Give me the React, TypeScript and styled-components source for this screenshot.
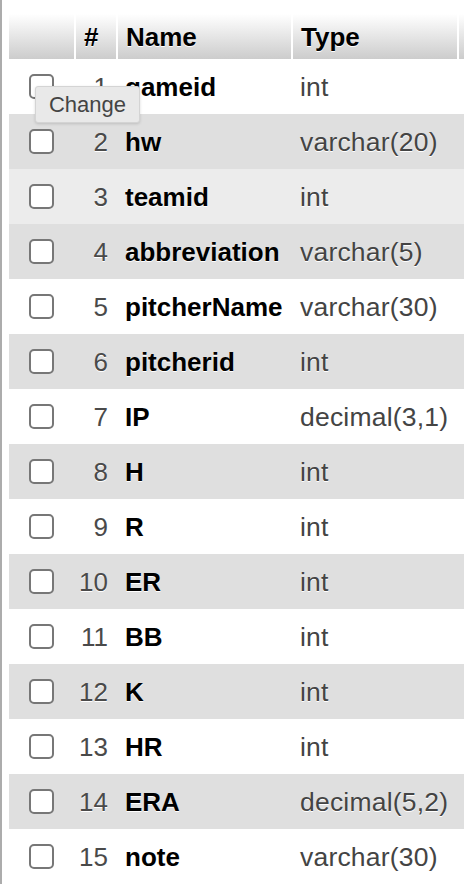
import React from "react";
import styled, { createGlobalStyle } from "styled-components";

const GlobalStyle = createGlobalStyle`
  html, body { margin: 0; padding: 0; background: #fff; overflow: hidden; }
  body { font-family: "Liberation Sans", Arial, sans-serif; }
`;

const Page = styled.div`
  width: 464px;
  height: 884px;
  border-left: 2px solid #acacac;
  box-sizing: border-box;
  padding: 14px 0 0 7px;
  overflow: hidden;
  position: relative;
`;

const Table = styled.div`
  width: 540px;
  display: flex;
  flex-direction: column;
`;

const cols = "67px 42px 175px 166px 1fr";

const HeaderRow = styled.div`
  display: grid;
  grid-template-columns: ${cols};
  height: 45px;
`;

const HeaderCell = styled.div<{ $pad?: number }>`
  border-right: 2px solid #fff;
  background: linear-gradient(to bottom, #ffffff 0%, #cccccc 100%);
  font-weight: bold;
  font-size: 26px;
  color: #000;
  text-shadow: 0 1px 0 #fff;
  display: flex;
  align-items: center;
  padding-left: ${(p) => p.$pad ?? 8}px;
  padding-top: 2px;
  box-sizing: border-box;
`;

const Row = styled.div<{ $bg: string }>`
  display: grid;
  grid-template-columns: ${cols};
  height: 55px;
  background: ${(p) => p.$bg};
  align-items: center;
`;

const CheckCell = styled.div`
  padding-left: 20px;
  display: flex;
  align-items: center;
`;

const Checkbox = styled.span`
  width: 25px;
  height: 25px;
  box-sizing: border-box;
  border: 2px solid #777;
  border-radius: 5px;
  background: #fff;
  display: inline-block;
`;

const NumCell = styled.div`
  text-align: right;
  padding-right: 10px;
  padding-top: 2px;
  font-size: 26px;
  color: #4a4a4a;
  text-shadow: 0 1px 0 #fff;
`;

const NameCell = styled.div`
  padding-left: 7px;
  padding-top: 2px;
  font-size: 26px;
  font-weight: bold;
  color: #000;
  white-space: nowrap;
  text-shadow: 0 1px 0 #fff;
`;

const TypeCell = styled.div`
  padding-left: 7px;
  padding-top: 2px;
  font-size: 26.5px;
  letter-spacing: 0.2px;
  color: #444;
  white-space: nowrap;
  text-shadow: 0 1px 0 #fff;
`;

const Tooltip = styled.div`
  position: absolute;
  left: 33px;
  top: 86px;
  width: 105px;
  height: 37px;
  box-sizing: border-box;
  background: #e9e9e9;
  border: 1px solid #d4d4d4;
  border-radius: 3px;
  box-shadow: 0 1px 3px rgba(0, 0, 0, 0.15);
  color: #444;
  font-size: 22px;
  display: flex;
  align-items: center;
  justify-content: center;
`;

const rows: [string, string][] = [
  ["gameid", "int"],
  ["hw", "varchar(20)"],
  ["teamid", "int"],
  ["abbreviation", "varchar(5)"],
  ["pitcherName", "varchar(30)"],
  ["pitcherid", "int"],
  ["IP", "decimal(3,1)"],
  ["H", "int"],
  ["R", "int"],
  ["ER", "int"],
  ["BB", "int"],
  ["K", "int"],
  ["HR", "int"],
  ["ERA", "decimal(5,2)"],
  ["note", "varchar(30)"],
];

function rowBg(i: number): string {
  if (i === 2) return "#ececec";
  return i % 2 === 1 ? "#dfdfdf" : "#ffffff";
}

export default function App() {
  return (
    <>
      <GlobalStyle />
      <Page>
        <Table>
          <HeaderRow>
            <HeaderCell />
            <HeaderCell>#</HeaderCell>
            <HeaderCell>Name</HeaderCell>
            <HeaderCell>Type</HeaderCell>
            <HeaderCell />
          </HeaderRow>
          {rows.map(([name, type], i) => (
            <Row key={name} $bg={rowBg(i)}>
              <CheckCell>
                <Checkbox />
              </CheckCell>
              <NumCell>{i + 1}</NumCell>
              <NameCell>{name}</NameCell>
              <TypeCell>{type}</TypeCell>
              <div />
            </Row>
          ))}
        </Table>
        <Tooltip>Change</Tooltip>
      </Page>
    </>
  );
}
